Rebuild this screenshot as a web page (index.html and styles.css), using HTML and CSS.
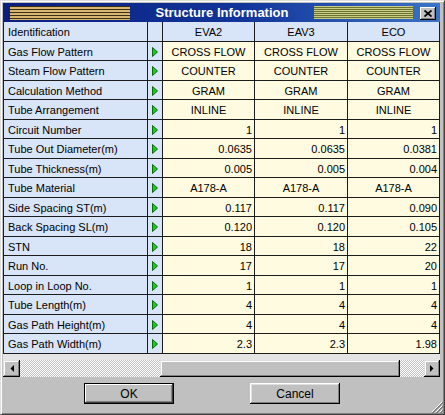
FILE: index.html
```html
<!DOCTYPE html>
<html>
<head>
<meta charset="utf-8">
<title>Structure Information</title>
<link rel="stylesheet" href="styles.css">
</head>
<body>
<div class="window">
  <div class="titlebar">
    <div class="stripes-left"></div>
    <div class="title">Structure Information</div>
    <div class="stripes-right"></div>
    <div class="close"><svg width="8" height="7" viewBox="0 0 8 7"><path d="M0.5 0.5 L7.5 6.5 M7.5 0.5 L0.5 6.5" stroke="#000" stroke-width="1.7" fill="none"/></svg></div>
  </div>
  <div class="grid">
    <div class="lbl">Identification</div><div class="arr"></div><div class="hdr">EVA2</div><div class="hdr">EAV3</div><div class="hdr">ECO</div>

    <div class="lbl">Gas Flow Pattern</div><div class="arr"><svg class="tri" width="6" height="10" viewBox="0 0 6 10"><path d="M0.5 0.5 L5.5 5 L0.5 9.5 Z"/></svg></div><div class="val">CROSS FLOW</div><div class="val">CROSS FLOW</div><div class="val">CROSS FLOW</div>

    <div class="lbl">Steam Flow Pattern</div><div class="arr"><svg class="tri" width="6" height="10" viewBox="0 0 6 10"><path d="M0.5 0.5 L5.5 5 L0.5 9.5 Z"/></svg></div><div class="val">COUNTER</div><div class="val">COUNTER</div><div class="val">COUNTER</div>

    <div class="lbl">Calculation Method</div><div class="arr"><svg class="tri" width="6" height="10" viewBox="0 0 6 10"><path d="M0.5 0.5 L5.5 5 L0.5 9.5 Z"/></svg></div><div class="val">GRAM</div><div class="val">GRAM</div><div class="val">GRAM</div>

    <div class="lbl">Tube Arrangement</div><div class="arr"><svg class="tri" width="6" height="10" viewBox="0 0 6 10"><path d="M0.5 0.5 L5.5 5 L0.5 9.5 Z"/></svg></div><div class="val">INLINE</div><div class="val">INLINE</div><div class="val">INLINE</div>

    <div class="lbl">Circuit Number</div><div class="arr"><svg class="tri" width="6" height="10" viewBox="0 0 6 10"><path d="M0.5 0.5 L5.5 5 L0.5 9.5 Z"/></svg></div><div class="val num">1</div><div class="val num">1</div><div class="val num">1</div>

    <div class="lbl">Tube Out Diameter(m)</div><div class="arr"><svg class="tri" width="6" height="10" viewBox="0 0 6 10"><path d="M0.5 0.5 L5.5 5 L0.5 9.5 Z"/></svg></div><div class="val num">0.0635</div><div class="val num">0.0635</div><div class="val num">0.0381</div>

    <div class="lbl">Tube Thickness(m)</div><div class="arr"><svg class="tri" width="6" height="10" viewBox="0 0 6 10"><path d="M0.5 0.5 L5.5 5 L0.5 9.5 Z"/></svg></div><div class="val num">0.005</div><div class="val num">0.005</div><div class="val num">0.004</div>

    <div class="lbl">Tube Material</div><div class="arr"><svg class="tri" width="6" height="10" viewBox="0 0 6 10"><path d="M0.5 0.5 L5.5 5 L0.5 9.5 Z"/></svg></div><div class="val">A178-A</div><div class="val">A178-A</div><div class="val">A178-A</div>

    <div class="lbl">Side Spacing ST(m)</div><div class="arr"><svg class="tri" width="6" height="10" viewBox="0 0 6 10"><path d="M0.5 0.5 L5.5 5 L0.5 9.5 Z"/></svg></div><div class="val num">0.117</div><div class="val num">0.117</div><div class="val num">0.090</div>

    <div class="lbl">Back Spacing SL(m)</div><div class="arr"><svg class="tri" width="6" height="10" viewBox="0 0 6 10"><path d="M0.5 0.5 L5.5 5 L0.5 9.5 Z"/></svg></div><div class="val num">0.120</div><div class="val num">0.120</div><div class="val num">0.105</div>

    <div class="lbl">STN</div><div class="arr"><svg class="tri" width="6" height="10" viewBox="0 0 6 10"><path d="M0.5 0.5 L5.5 5 L0.5 9.5 Z"/></svg></div><div class="val num">18</div><div class="val num">18</div><div class="val num">22</div>

    <div class="lbl">Run No.</div><div class="arr"><svg class="tri" width="6" height="10" viewBox="0 0 6 10"><path d="M0.5 0.5 L5.5 5 L0.5 9.5 Z"/></svg></div><div class="val num">17</div><div class="val num">17</div><div class="val num">20</div>

    <div class="lbl">Loop in Loop No.</div><div class="arr"><svg class="tri" width="6" height="10" viewBox="0 0 6 10"><path d="M0.5 0.5 L5.5 5 L0.5 9.5 Z"/></svg></div><div class="val num">1</div><div class="val num">1</div><div class="val num">1</div>

    <div class="lbl">Tube Length(m)</div><div class="arr"><svg class="tri" width="6" height="10" viewBox="0 0 6 10"><path d="M0.5 0.5 L5.5 5 L0.5 9.5 Z"/></svg></div><div class="val num">4</div><div class="val num">4</div><div class="val num">4</div>

    <div class="lbl">Gas Path Height(m)</div><div class="arr"><svg class="tri" width="6" height="10" viewBox="0 0 6 10"><path d="M0.5 0.5 L5.5 5 L0.5 9.5 Z"/></svg></div><div class="val num">4</div><div class="val num">4</div><div class="val num">4</div>

    <div class="lbl">Gas Path Width(m)</div><div class="arr"><svg class="tri" width="6" height="10" viewBox="0 0 6 10"><path d="M0.5 0.5 L5.5 5 L0.5 9.5 Z"/></svg></div><div class="val num">2.3</div><div class="val num">2.3</div><div class="val num">1.98</div>
  </div>
  <div class="strip"></div>
  <div class="scrollbar">
    <div class="sbtn"><svg width="4" height="7" viewBox="0 0 4 7"><path d="M4 0 L0.5 3.5 L4 7 Z" fill="#000"/></svg></div>
    <div class="track track-a"></div>
    <div class="thumb"></div>
    <div class="track track-b"></div>
    <div class="sbtn sbtn-r"><svg width="4" height="7" viewBox="0 0 4 7"><path d="M0 0 L3.5 3.5 L0 7 Z" fill="#000"/></svg></div>
  </div>
  <div class="buttons">
    <div class="btn btn-default">OK</div>
    <div class="btn">Cancel</div>
  </div>
  <svg class="grip" width="12" height="12" viewBox="0 0 12 12">
    <path d="M11 1 L1 11 M11 5 L5 11 M11 9 L9 11" stroke="#fff" stroke-width="1"/>
    <path d="M12 1 L1 12 M12 2 L2 12 M12 5 L5 12 M12 6 L6 12 M12 9 L9 12 M12 10 L10 12" stroke="#808080" stroke-width="1"/>
  </svg>
</div>
</body>
</html>
```

FILE: styles.css
```css
* {
  box-sizing: border-box;
}

html, body {
  margin: 0;
  padding: 0;
}

body {
  width: 445px;
  height: 415px;
  overflow: hidden;
  background: #c0c0c0;
  font-family: "Liberation Sans", Arial, sans-serif;
  font-size: 11px;
  color: #000;
}

.window {
  position: relative;
  width: 445px;
  height: 415px;
  background: #c0c0c0;
  border: 1px solid;
  border-color: #dfdfdf #404040 #404040 #dfdfdf;
  box-shadow: inset 1px 1px #fff, inset -1px -1px #808080;
  padding: 2px 4px 0 2px;
  display: flex;
  flex-direction: column;
}

/* title bar */
.titlebar {
  height: 19px;
  flex: none;
  display: flex;
  align-items: flex-start;
  background: linear-gradient(to right, #0a1f7e 0%, #12349a 55%, #3a74c6 100%);
}

.stripes-left {
  margin: 3px 0 0 7px;
  width: 120px;
  height: 14px;
  background: repeating-linear-gradient(to bottom, #3a3018 0 1px, #d9b572 1px 3px);
}

.title {
  flex: 1;
  text-align: center;
  color: #fff;
  font-weight: bold;
  font-size: 13px;
  line-height: 19px;
}

.stripes-right {
  margin-top: 3px;
  width: 99px;
  height: 13px;
  background: repeating-linear-gradient(to bottom, #c9cd84 0 1px, #6d7332 1px 2px);
}

.close {
  margin: 4px 4px 0 7px;
  width: 16px;
  height: 13px;
  background: #c0c0c0;
  box-shadow: inset -1px -1px #000, inset 1px 1px #fff, inset -2px -2px #808080;
  display: flex;
  align-items: center;
  justify-content: center;
}

/* grid */
.grid {
  flex: none;
  width: 437px;
  display: grid;
  grid-template-columns: 143px 14px 91px 92px 91px;
  grid-template-rows: repeat(8, 19px 18px) 19px;
  gap: 1px;
  padding: 0 1px 1px 1px;
  background: #1c1c1c;
}

.lbl,
.arr,
.hdr,
.val {
  display: flex;
  align-items: center;
  padding-top: 1px;
  white-space: nowrap;
  overflow: hidden;
}

.lbl {
  background: #d8e4f7;
  padding-left: 4px;
}

.arr {
  background: #d8e4f7;
  justify-content: center;
}

.tri path {
  fill: #1fc81f;
  stroke: #0b6b0b;
  stroke-width: 1;
}

.hdr {
  background: #d8e4f7;
  justify-content: center;
}

.val {
  background: #fefbe0;
  justify-content: center;
}

.val.num {
  justify-content: flex-end;
  padding-right: 2px;
}

/* strip under grid */
.strip {
  flex: none;
  height: 6px;
  background: #e4e4e4;
}

/* scrollbar */
.scrollbar {
  flex: none;
  height: 17px;
  display: flex;
}

.sbtn {
  width: 17px;
  background: #c0c0c0;
  box-shadow: inset -1px -1px #000, inset 1px 1px #dfdfdf, inset -2px -2px #808080, inset 2px 2px #fff;
  display: flex;
  align-items: center;
  justify-content: center;
}

.sbtn-r {
  width: 16px;
}

.track {
  background: repeating-conic-gradient(#c0c0c0 0 25%, #fff 0 50%) 0 0 / 2px 2px;
}

.track-a {
  width: 140px;
}

.track-b {
  flex: 1;
}

.thumb {
  width: 240px;
  background: #c0c0c0;
  box-shadow: inset -1px -1px #000, inset 1px 1px #dfdfdf, inset -2px -2px #808080, inset 2px 2px #fff;
}

/* buttons */
.buttons {
  display: flex;
  gap: 76px;
  padding: 6px 0 0 81px;
}

.btn {
  width: 90px;
  height: 21px;
  background: #c0c0c0;
  box-shadow: inset -1px -1px #000, inset 1px 1px #fff, inset -2px -2px #808080, inset 2px 2px #dfdfdf;
  display: flex;
  align-items: center;
  justify-content: center;
  font-size: 12px;
}

.btn-default {
  border: 1px solid #000;
  box-shadow: inset -1px -1px #404040, inset 1px 1px #fff, inset -2px -2px #808080;
}

.grip {
  position: absolute;
  right: 1px;
  bottom: 1px;
}
```
